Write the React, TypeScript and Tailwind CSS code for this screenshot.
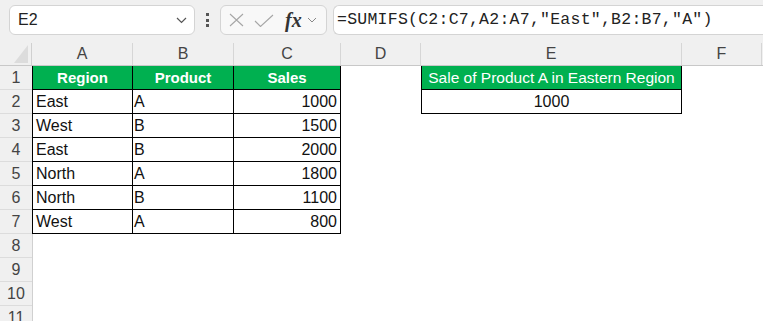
import React from 'react';

const cols = [
  { key: 'A', w: 'w-[101px]' },
  { key: 'B', w: 'w-[101px]' },
  { key: 'C', w: 'w-[107px]' },
  { key: 'D', w: 'w-[80px]' },
  { key: 'E', w: 'w-[261px]' },
  { key: 'F', w: 'w-[80px]' },
];

const data = [
  ['East', 'A', '1000'],
  ['West', 'B', '1500'],
  ['East', 'B', '2000'],
  ['North', 'A', '1800'],
  ['North', 'B', '1100'],
  ['West', 'A', '800'],
];

function RowNum({ n }: { n: number }) {
  return (
    <div className="w-[32px] shrink-0 h-full bg-[#f0f0f0] border-b border-[#dcdcdc] flex items-center justify-center text-[16px] text-[#444]">
      {n}
    </div>
  );
}

export default function App() {
  return (
    <main className="w-[763px] h-[321px] overflow-hidden bg-white font-['Liberation_Sans',Arial,sans-serif] text-[#111]">
      {/* formula bar */}
      <div className="h-[43px] bg-[#f0f0f0] flex items-start pt-[5px] pl-[9px]">
        <div className="w-[186px] h-[30px] bg-white border border-[#d4d4d4] rounded-[6px] flex items-center pl-[8px] pr-[7px]">
          <span className="text-[16px] text-[#222] flex-1">E2</span>
          <svg width="11" height="7" viewBox="0 0 11 7" fill="none" stroke="#555" strokeWidth="1.2"><path d="M1 1l4.5 4.5L10 1" /></svg>
        </div>
        <div className="w-[25px] h-[30px] flex flex-col items-center justify-center gap-[2.5px]">
          <span className="w-[3px] h-[3px] bg-[#555]" />
          <span className="w-[3px] h-[3px] bg-[#555]" />
          <span className="w-[3px] h-[3px] bg-[#555]" />
        </div>
        <div className="w-[107px] h-[30px] bg-[#f8f8f8] border border-[#d4d4d4] rounded-[6px] flex items-center pl-[8px] gap-[10px]">
          <svg width="15" height="14" viewBox="0 0 15 14" fill="none" stroke="#a6a6a6" strokeWidth="1.1"><path d="M1 1l13 12M14 1L1 13" /></svg>
          <svg width="20" height="13" viewBox="0 0 20 13" fill="none" stroke="#a6a6a6" strokeWidth="1.1"><path d="M1 7l5.5 5.5L19 1" /></svg>
          <span className="font-['Liberation_Serif',serif] italic font-bold text-[20px] text-[#333] leading-none ml-[1px]">fx</span>
          <svg className="-ml-[5px]" width="10" height="6" viewBox="0 0 10 6" fill="none" stroke="#888" strokeWidth="1"><path d="M1 1l4 4 4-4" /></svg>
        </div>
        <div className="ml-[6px] flex-1 h-[30px] bg-white border border-r-0 border-[#d4d4d4] rounded-l-[6px] flex items-center pl-[3px]">
          <span className="font-['Liberation_Mono',monospace] text-[16.5px] tracking-[0.25px] text-[#222]">=SUMIFS(C2:C7,A2:A7,"East",B2:B7,"A")</span>
        </div>
      </div>

      {/* column headers */}
      <div className="flex h-[23px] bg-[#f0f0f0] border-b border-[#c8c8c8]">
        <div className="w-[32px] shrink-0 relative border-r border-[#d0d0d0]">
          <svg className="absolute right-[3px] bottom-[2px]" width="14" height="18" viewBox="0 0 14 18"><path d="M14 0V18H0Z" fill="#dcdcdc" /></svg>
        </div>
        {cols.map(c => (
          <div key={c.key} className={`${c.w} shrink-0 flex items-center justify-center text-[16px] text-[#444] border-r border-[#d6d6d6]`}>
            {c.key}
          </div>
        ))}
      </div>

      {/* row 1 */}
      <div className="flex h-[24px]">
        <RowNum n={1} />
        {['Region', 'Product', 'Sales'].map((t, i) => (
          <div key={t} className={`${cols[i].w} shrink-0 bg-[#00b050] text-white font-bold text-[15px] pt-[1px] flex items-center justify-center border-b border-r border-black ${i === 0 ? 'border-l' : ''}`}>
            {t}
          </div>
        ))}
        <div className="w-[80px] shrink-0" />
        <div className="w-[261px] shrink-0 bg-[#00b050] text-white text-[15.5px] pt-[1px] flex items-center justify-center border border-t-0 border-black">
          Sale of Product A in Eastern Region
        </div>
      </div>

      {/* rows 2-7 */}
      {data.map((r, ri) => (
        <div key={ri} className="flex h-[24px]">
          <RowNum n={ri + 2} />
          <div className="w-[101px] shrink-0 border-l border-r border-b border-black pl-[3px] pt-[1px] flex items-center text-[16px]">{r[0]}</div>
          <div className="w-[101px] shrink-0 border-r border-b border-black pl-[1px] pt-[1px] flex items-center text-[16px]">{r[1]}</div>
          <div className="w-[107px] shrink-0 border-r border-b border-black pr-[3px] pt-[1px] flex items-center justify-end text-[16px]">{r[2]}</div>
          <div className="w-[80px] shrink-0" />
          {ri === 0 && (
            <div className="w-[261px] shrink-0 border-l border-r border-b border-black pt-[1px] flex items-center justify-center text-[16px]">1000</div>
          )}
        </div>
      ))}

      {/* empty rows */}
      {[8, 9, 10, 11].map(n => (
        <div key={n} className="flex h-[24px]">
          <RowNum n={n} />
          <div className="w-[1px] bg-[#d0d0d0]" />
        </div>
      ))}
    </main>
  );
}
